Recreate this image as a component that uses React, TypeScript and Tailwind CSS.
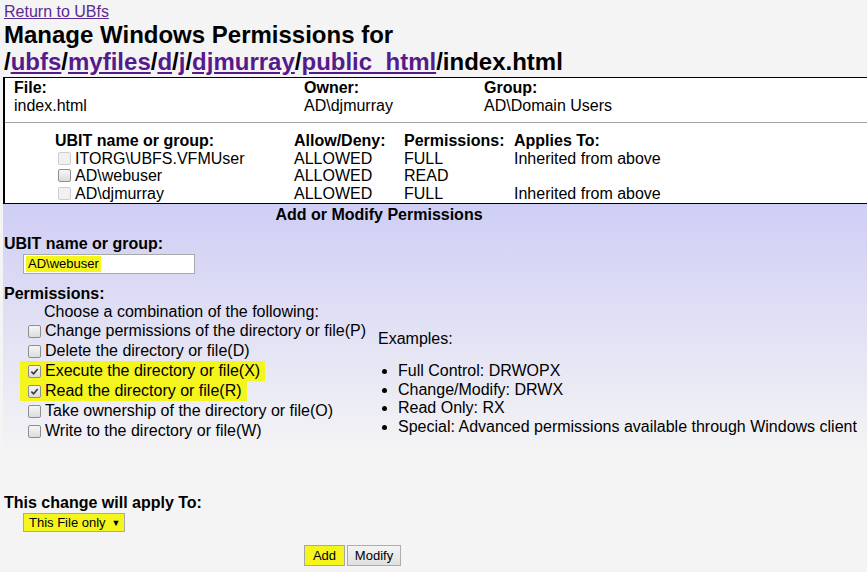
import React from "react";

type Perm = { label: string; checked?: boolean };

const aces = [
  { name: "ITORG\\UBFS.VFMUser", allow: "ALLOWED", perm: "FULL", applies: "Inherited from above", disabled: true },
  { name: "AD\\webuser", allow: "ALLOWED", perm: "READ", applies: "", disabled: false },
  { name: "AD\\djmurray", allow: "ALLOWED", perm: "FULL", applies: "Inherited from above", disabled: true },
];

const perms: Perm[] = [
  { label: "Change permissions of the directory or file(P)" },
  { label: "Delete the directory or file(D)" },
  { label: "Execute the directory or file(X)", checked: true },
  { label: "Read the directory or file(R)", checked: true },
  { label: "Take ownership of the directory or file(O)" },
  { label: "Write to the directory or file(W)" },
];

const examples = [
  "Full Control: DRWOPX",
  "Change/Modify: DRWX",
  "Read Only: RX",
  "Special: Advanced permissions available through Windows client",
];

function Box({ checked, disabled }: { checked?: boolean; disabled?: boolean }) {
  return (
    <span
      className={
        "relative inline-flex h-[13px] w-[13px] shrink-0 items-center justify-center rounded-[2px] border " +
        (disabled
          ? "border-[#cdcdcd] bg-[#f1f1f1]"
          : "border-[#8e8e8e] bg-[linear-gradient(to_bottom,#f6f6f6,#dcdcdc)]")
      }
    >
      {checked ? (
        <svg viewBox="0 0 10 10" className="h-[9px] w-[9px]" aria-hidden>
          <path d="M1.5 5.2 L4 7.6 L8.6 2.2" fill="none" stroke="#3b3b3b" strokeWidth="1.8" />
        </svg>
      ) : null}
    </span>
  );
}

function PathLink({ children }: { children: React.ReactNode }) {
  return <a href="#" className="text-[#551a8b] underline">{children}</a>;
}

export default function App() {
  return (
    <div className="min-h-[572px] overflow-hidden bg-[#f4f4f4] font-['Liberation_Sans',Arial,sans-serif] text-[16px] text-black">
      <div className="px-[4px] pt-[2px]">
        <div className="leading-[19px]">
          <a href="#" className="text-[#5b2a93] underline">
            Return to UBfs
          </a>
        </div>
        <h1 className="text-[24px] font-bold leading-[27px]">
          Manage Windows Permissions for
          <br />/<PathLink>ubfs</PathLink>/<PathLink>myfiles</PathLink>/<PathLink>d</PathLink>/
          <PathLink>j</PathLink>/<PathLink>djmurray</PathLink>/<PathLink>public_html</PathLink>/index.html
        </h1>
      </div>

      {/* file / ACL table */}
      <div className="ml-[3px] mt-[2px] border-b border-l-2 border-t border-black bg-white leading-[18px]">
        <div className="grid grid-cols-[290px_180px_1fr] border-b border-[#a3a3a3] pb-[7px] pl-[9px] pt-[1px]">
          <div>
            <div className="font-bold">File:</div>
            <div>index.html</div>
          </div>
          <div>
            <div className="font-bold">Owner:</div>
            <div>AD\djmurray</div>
          </div>
          <div>
            <div className="font-bold">Group:</div>
            <div>AD\Domain Users</div>
          </div>
        </div>
        <div className="grid grid-cols-[239px_110px_110px_1fr] pb-[1px] pl-[50px] pt-[9px] leading-[17.5px]">
          <div className="font-bold">UBIT name or group:</div>
          <div className="font-bold">Allow/Deny:</div>
          <div className="font-bold">Permissions:</div>
          <div className="font-bold">Applies To:</div>
          {aces.map((a) => (
            <React.Fragment key={a.name}>
              <div className="flex items-center gap-[4px] pl-[3px]">
                <Box disabled={a.disabled} />
                <span>{a.name}</span>
              </div>
              <div>{a.allow}</div>
              <div>{a.perm}</div>
              <div>{a.applies}</div>
            </React.Fragment>
          ))}
        </div>
      </div>

      {/* add / modify form */}
      <div className="ml-[3px] bg-[linear-gradient(to_bottom,#cfcef5_0px,#f4f4f4_250px)] pb-[8px] leading-[18px]">
        <div className="w-[752px] pt-[2px] text-center font-bold">Add or Modify Permissions</div>

        <div className="mt-[11px] pl-[1px] font-bold">UBIT name or group:</div>
        <div className="ml-[20px] mt-[1px] flex h-[20px] w-[172px] items-center border border-[#a9a9a9] bg-white pl-[2px]">
          <span className="bg-[#f5f51e] px-[2px] text-[13px] leading-[16px]">AD\webuser</span>
        </div>

        <div className="mt-[11px] pl-[1px] font-bold">Permissions:</div>
        <div className="flex">
          <div className="w-[375px]">
            <div className="pl-[41px]">Choose a combination of the following:</div>
            {perms.map((p) => (
              <div key={p.label} className="flex h-[20px] items-center pl-[17px]">
                <span
                  className={
                    "flex h-[20px] items-center gap-[4px] pl-[8px] pr-[5px] " +
                    (p.checked ? "bg-[#f5f51e]" : "")
                  }
                >
                  <Box checked={p.checked} />
                  <span>{p.label}</span>
                </span>
              </div>
            ))}
          </div>
          <div className="pt-[27px]">
            <div>Examples:</div>
            <ul className="mt-[14px] list-disc pl-[20px]">
              {examples.map((e) => (
                <li key={e} className="leading-[18.5px]">
                  {e}
                </li>
              ))}
            </ul>
          </div>
        </div>

        <div className="mt-[53px] pl-[1px] font-bold">This change will apply To:</div>
        <div className="ml-[20px] mt-[1px] flex h-[19px] w-[102px] items-center gap-[6px] border border-[#a9a9a9] bg-[#f5f51e] pl-[5px] text-[13px]">
          <span>This File only</span>
          <span className="text-[9px]">▼</span>
        </div>

        <div className="mt-[13px] flex gap-[2px] pl-[301px]">
          <button className="h-[21px] w-[41px] border border-[#a8a8a0] bg-[#f5f51e] text-[13px]">Add</button>
          <button className="h-[21px] w-[54px] border border-[#adadad] bg-[linear-gradient(to_bottom,#f4f4f4,#e0e0e0)] text-[13px]">
            Modify
          </button>
        </div>
      </div>
    </div>
  );
}
